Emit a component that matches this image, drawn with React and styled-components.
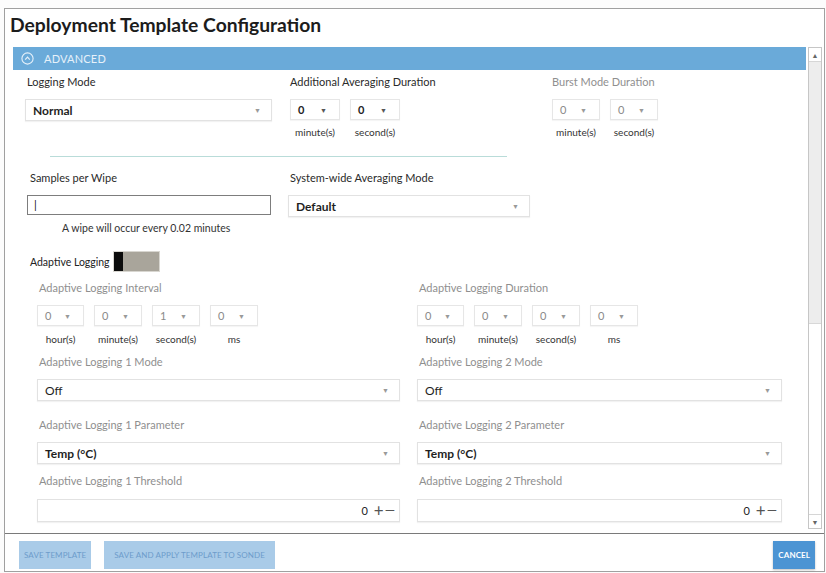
import React from "react";
import styled, { createGlobalStyle } from "styled-components";

const GlobalStyle = createGlobalStyle`
  html, body { margin: 0; padding: 0; background: #fcfcfc; }
  body { font-family: Lato, "Open Sans", sans-serif; color: #222; }
  * { box-sizing: border-box; }
`;

const Frame = styled.div`
  margin: 8px 0 0 4px;
  width: 821px;
  height: 564px;
  border: 1px solid #a0a0a0;
  background: #fff;
  display: flex;
  flex-direction: column;
`;

const Title = styled.h1`
  margin: 0;
  height: 37px;
  padding: 4px 0 0 5px;
  font-size: 19.3px;
  line-height: 23px;
  font-weight: 700;
  color: #1c1c1c;
`;

const Body = styled.div`
  display: flex;
  height: 487px;
  padding: 1px 0 0 8px;
`;

const ScrollArea = styled.div`
  width: 793px;
  overflow: hidden;
`;

const Scrollbar = styled.div`
  width: 14px;
  margin-left: 2px;
  border: 1px solid #c6c6c6;
  background: #fff;
  display: flex;
  flex-direction: column;
  margin-bottom: 4px;
`;

const ScrollArrow = styled.div`
  height: 14px;
  border-bottom: ${(p) => (p.$down ? "none" : "1px solid #d6d6d6")};
  border-top: ${(p) => (p.$down ? "1px solid #d6d6d6" : "none")};
  display: flex;
  align-items: center;
  justify-content: center;
  font-size: 7px;
  color: #666;
`;

const Thumb = styled.div`
  height: 262px;
  background: #ededed;
  border-bottom: 1px solid #d8d8d8;
`;

const Track = styled.div`
  flex: 1;
`;

const SectionBar = styled.div`
  height: 23px;
  background: #6aaad9;
  display: flex;
  align-items: center;
  padding-left: 8px;
  gap: 10px;
  color: #e6f1fa;
  font-size: 11px;
  letter-spacing: 0.2px;
`;

const Content = styled.div`
  padding: 5px 0 0 12px;
`;

const TopRow = styled.div`
  display: grid;
  grid-template-columns: 265px 262px 1fr;
`;

const Label = styled.div`
  font-size: 11px;
  line-height: 14px;
  height: 14px;
  color: ${(p) => (p.$muted ? "#8f8f8f" : "#2a2a2a")};
  margin: 0 0 ${(p) => p.$gap ?? 10}px ${(p) => p.$indent ?? 2}px;
`;

const Select = styled.div`
  width: ${(p) => p.$width}px;
  height: ${(p) => p.$height ?? 22}px;
  border: 1px solid #e2e2e2;
  box-shadow: 0 1px 1px rgba(0, 0, 0, 0.05);
  display: flex;
  align-items: center;
  justify-content: space-between;
  padding: 0 10px 0 7px;
  font-size: 12px;
  font-weight: ${(p) => (p.$bold ? 700 : 400)};
  color: ${(p) => (p.$muted ? "#777" : "#1f1f1f")};
`;

const Caret = styled.span`
  font-size: 7px;
  color: ${(p) => (p.$muted ? "#999" : "#555")};
`;

const SmallGroup = styled.div`
  display: flex;
  gap: ${(p) => p.$gap}px;
`;

const SmallCol = styled.div`
  display: flex;
  flex-direction: column;
  align-items: center;
`;

const SmallSelect = styled.div`
  width: ${(p) => p.$width}px;
  height: 21px;
  border: 1px solid #e6e6e6;
  box-shadow: 0 1px 1px rgba(0, 0, 0, 0.04);
  display: flex;
  align-items: center;
  justify-content: space-between;
  padding: 0 12px 0 7px;
  font-size: 11px;
  font-weight: ${(p) => (p.$bold ? 700 : 400)};
  color: ${(p) => (p.$muted ? "#8a8a8a" : "#222")};
`;

const Unit = styled.div`
  font-size: 10px;
  line-height: 12px;
  margin-top: ${(p) => p.$top ?? 7}px;
  color: #333;
`;

const Divider = styled.div`
  width: 457px;
  height: 1px;
  background: #b9dcd9;
  margin: 18px 0 0 25px;
`;

const MidRow = styled.div`
  display: grid;
  grid-template-columns: 263px 262px;
  margin-top: 14px;
`;

const TextInput = styled.div`
  width: 244px;
  height: 20px;
  margin-left: 2px;
  border: 1px solid #7d7d7d;
  font-size: 11px;
  line-height: 18px;
  padding-left: 6px;
  color: #111;
`;

const Hint = styled.div`
  font-size: 10.5px;
  line-height: 12px;
  margin: 7px 0 0 37px;
  color: #333;
`;

const ToggleRow = styled.div`
  display: flex;
  align-items: center;
  gap: 3px;
  margin: 17px 0 0 5px;
  height: 21px;
  font-size: 10.5px;
  color: #222;
`;

const Toggle = styled.div`
  width: 47px;
  height: 21px;
  border: 1px solid #d8d6d0;
  background: #a9a59b;
  display: flex;
`;

const Knob = styled.div`
  width: 9px;
  background: #0c0c0c;
`;

const AdaptiveGrid = styled.div`
  display: grid;
  grid-template-columns: 363px 365px;
  column-gap: 17px;
  padding-left: 12px;
  margin-top: 9px;
`;

const Column = styled.div`
  display: flex;
  flex-direction: column;
`;

const Block = styled.div`
  margin-top: ${(p) => p.$top ?? 0}px;
`;

const NumberInput = styled.div`
  height: 23px;
  border: 1px solid #e2e2e2;
  box-shadow: 0 1px 1px rgba(0, 0, 0, 0.05);
  display: flex;
  align-items: center;
  justify-content: flex-end;
  padding-right: 4px;
  font-size: 11px;
  color: #222;
`;

const StepSign = styled.span`
  font-size: ${(p) => p.$size}px;
  line-height: 1;
  color: #555;
  margin-left: ${(p) => p.$left}px;
`;

const Footer = styled.div`
  flex: 1;
  border-top: 1px solid #7a7a7a;
  display: flex;
  align-items: flex-start;
  padding: 7px 9px 0 14px;
  gap: 13px;
`;

const Button = styled.button`
  height: 28px;
  border: none;
  padding: 0 ${(p) => p.$pad ?? 6}px;
  font-family: Lato, "Open Sans", sans-serif;
  font-size: 8px;
  letter-spacing: 0.1px;
  text-transform: uppercase;
  background: ${(p) => (p.$primary ? "#4c94d3" : "#a9cbe8")};
  color: ${(p) => (p.$primary ? "#fff" : "#6d9ccb")};
  font-weight: ${(p) => (p.$primary ? 700 : 400)};
  margin-left: ${(p) => (p.$right ? "auto" : "0")};
  box-shadow: ${(p) => (p.$primary ? "0 1px 2px rgba(0,0,0,0.25)" : "none")};
`;

const ChevronCircle = () => (
  <svg width="13" height="13" viewBox="0 0 13 13">
    <circle cx="6.5" cy="6.5" r="5.6" fill="none" stroke="#e6f1fa" strokeWidth="1.1" />
    <path d="M4.2 7.6 L6.5 5.2 L8.8 7.6" fill="none" stroke="#e6f1fa" strokeWidth="1.2" />
  </svg>
);

const Small = ({ value, width, muted, bold, unit, unitTop }) => (
  <SmallCol>
    <SmallSelect $width={width} $muted={muted} $bold={bold}>
      {value}
      <Caret $muted={muted}>▼</Caret>
    </SmallSelect>
    <Unit $top={unitTop}>{unit}</Unit>
  </SmallCol>
);

const timeParts = (values) =>
  ["hour(s)", "minute(s)", "second(s)", "ms"].map((u, i) => (
    <Small key={u} value={values[i]} width={i === 0 ? 47 : 48} unit={u} muted unitTop={7} />
  ));

const Selectbox = ({ value, width, bold, muted }) => (
  <Select $width={width} $bold={bold} $muted={muted}>
    {value}
    <Caret $muted>▼</Caret>
  </Select>
);

const Threshold = () => (
  <NumberInput>
    0
    <StepSign $size={17} $left={6}>+</StepSign>
    <StepSign $size={13} $left={1}>—</StepSign>
  </NumberInput>
);

export default function App() {
  return (
    <>
      <GlobalStyle />
      <Frame>
        <Title>Deployment Template Configuration</Title>
        <Body>
          <ScrollArea>
            <SectionBar>
              <ChevronCircle />
              ADVANCED
            </SectionBar>
            <Content>
              <TopRow>
                <div>
                  <Label>Logging Mode</Label>
                  <Selectbox value="Normal" width={247} bold />
                </div>
                <div>
                  <Label $indent={0}>Additional Averaging Duration</Label>
                  <SmallGroup $gap={10}>
                    <Small value="0" width={50} bold unit="minute(s)" unitTop={6} />
                    <Small value="0" width={50} bold unit="second(s)" unitTop={6} />
                  </SmallGroup>
                </div>
                <div>
                  <Label $muted $indent={0}>Burst Mode Duration</Label>
                  <SmallGroup $gap={10}>
                    <Small value="0" width={48} muted unit="minute(s)" unitTop={6} />
                    <Small value="0" width={48} muted unit="second(s)" unitTop={6} />
                  </SmallGroup>
                </div>
              </TopRow>

              <Divider />

              <MidRow>
                <div>
                  <Label $indent={5}>Samples per Wipe</Label>
                  <TextInput>|</TextInput>
                  <Hint>A wipe will occur every 0.02 minutes</Hint>
                </div>
                <div>
                  <Label>System-wide Averaging Mode</Label>
                  <Selectbox value="Default" width={242} bold />
                </div>
              </MidRow>

              <ToggleRow>
                Adaptive Logging
                <Toggle>
                  <Knob />
                </Toggle>
              </ToggleRow>

              <AdaptiveGrid>
                <Column>
                  <Label $muted $gap={10}>Adaptive Logging Interval</Label>
                  <SmallGroup $gap={10}>{timeParts(["0", "0", "1", "0"])}</SmallGroup>
                  <Block $top={10}>
                    <Label $muted $gap={10}>Adaptive Logging 1 Mode</Label>
                    <Selectbox value="Off" width={363} />
                  </Block>
                  <Block $top={17}>
                    <Label $muted $gap={10}>Adaptive Logging 1 Parameter</Label>
                    <Selectbox value="Temp (°C)" width={363} bold />
                  </Block>
                  <Block $top={10}>
                    <Label $muted $gap={11}>Adaptive Logging 1 Threshold</Label>
                    <Threshold />
                  </Block>
                </Column>
                <Column>
                  <Label $muted $gap={10}>Adaptive Logging Duration</Label>
                  <SmallGroup $gap={10}>{timeParts(["0", "0", "0", "0"])}</SmallGroup>
                  <Block $top={10}>
                    <Label $muted $gap={10}>Adaptive Logging 2 Mode</Label>
                    <Selectbox value="Off" width={365} />
                  </Block>
                  <Block $top={17}>
                    <Label $muted $gap={10}>Adaptive Logging 2 Parameter</Label>
                    <Selectbox value="Temp (°C)" width={365} bold />
                  </Block>
                  <Block $top={10}>
                    <Label $muted $gap={11}>Adaptive Logging 2 Threshold</Label>
                    <Threshold />
                  </Block>
                </Column>
              </AdaptiveGrid>
            </Content>
          </ScrollArea>
          <Scrollbar>
            <ScrollArrow>▲</ScrollArrow>
            <Thumb />
            <Track />
            <ScrollArrow $down>▼</ScrollArrow>
          </Scrollbar>
        </Body>
        <Footer>
          <Button $pad={5}>Save Template</Button>
          <Button $pad={10}>Save and apply template to sonde</Button>
          <Button $primary $right $pad={5}>Cancel</Button>
        </Footer>
      </Frame>
    </>
  );
}
